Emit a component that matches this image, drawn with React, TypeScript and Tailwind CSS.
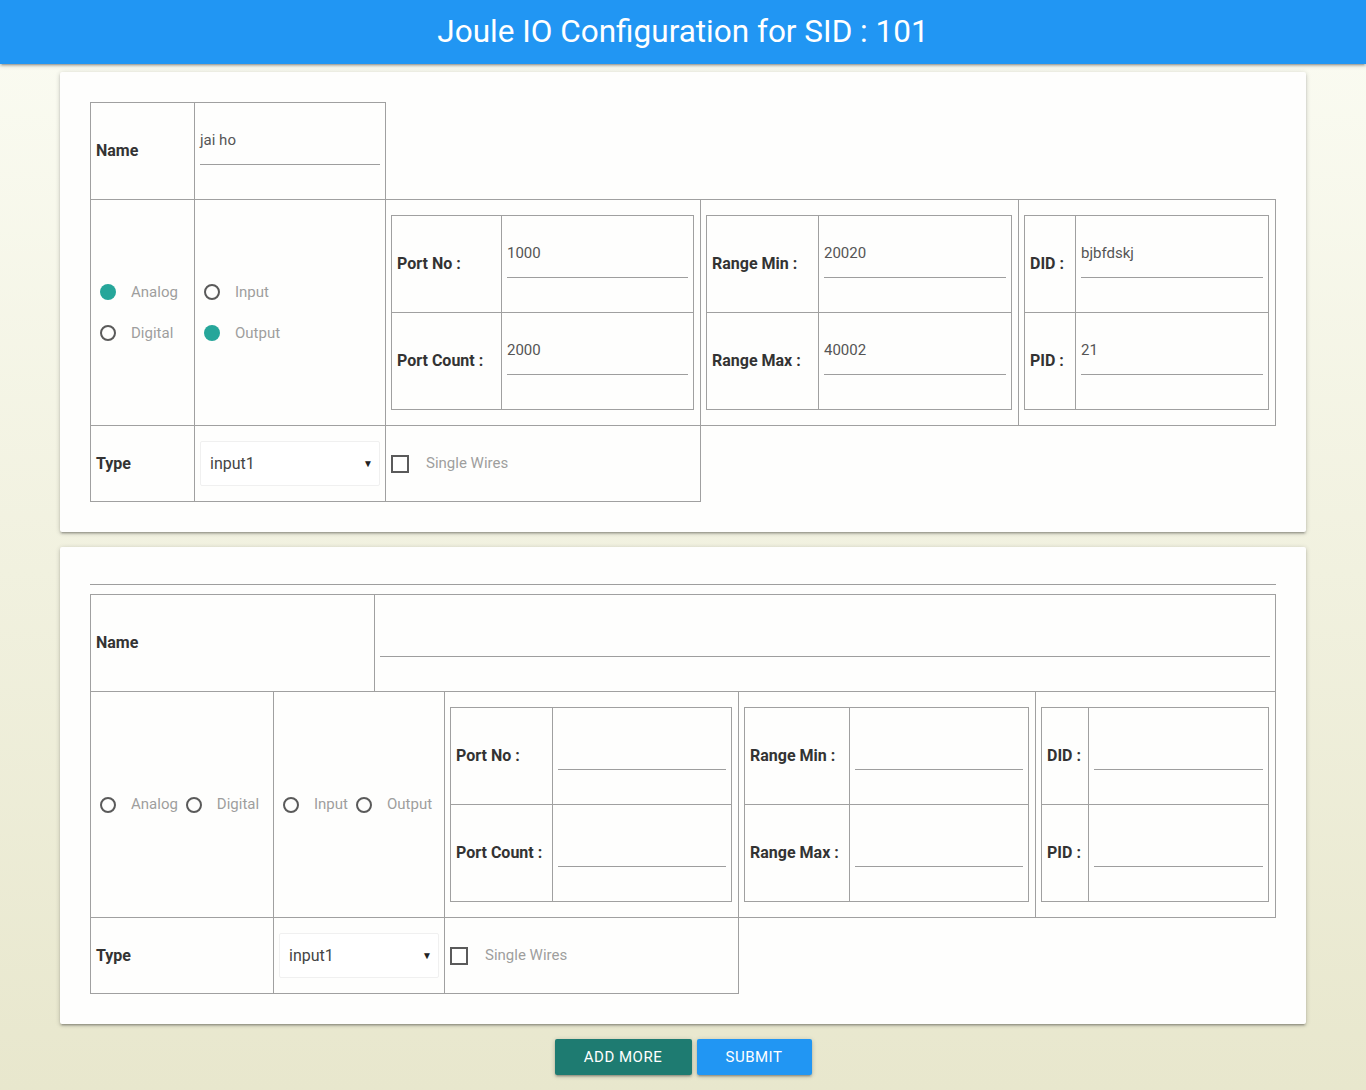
import React from 'react';

const line = 'border border-[#a0a0a0]';

function Label({ text }: { text: string }) {
  return (
    <td className={`${line} px-[5px] py-[15px] align-middle text-[16px] font-bold text-[#333]`}>
      {text}
    </td>
  );
}

function Field({ value = '', colSpan }: { value?: string; colSpan?: number }) {
  return (
    <td colSpan={colSpan} className={`${line} px-[5px] py-[15px] align-top`}>
      <div className="mb-[19px] h-[47px] border-b border-[#9e9e9e] text-[15px] leading-[44px] text-[#555]">
        {value}
      </div>
    </td>
  );
}

function Radio({ label, checked }: { label: string; checked?: boolean }) {
  return (
    <span className="inline-flex h-[25px] items-center pl-[4px]">
      {checked ? (
        <span className="h-[16px] w-[16px] rounded-full bg-[#26a69a]" />
      ) : (
        <span className="h-[16px] w-[16px] rounded-full border-2 border-[#5a5a5a]" />
      )}
      <span className="ml-[15px] text-[15px] text-[#9e9e9e]">{label}</span>
    </span>
  );
}

function SelectBox() {
  return (
    <div className="flex h-[45px] items-center justify-between rounded-[2px] border border-[#f0f0f0] bg-white pl-[9px] pr-[6px] text-[16px] text-[#444]">
      <span>input1</span>
      <span className="text-[10px] text-[#222]">▼</span>
    </div>
  );
}

function CheckBox() {
  return (
    <div className="flex items-center">
      <span className="h-[18px] w-[18px] border-2 border-[#5a5a5a]" />
      <span className="ml-[17px] text-[15px] text-[#9e9e9e]">Single Wires</span>
    </div>
  );
}

function Pair({
  w,
  lw,
  a,
  b,
}: {
  w: number;
  lw: number;
  a: [string, string];
  b: [string, string];
}) {
  return (
    <table className="table-fixed border-collapse" style={{ width: w }}>
      <colgroup>
        <col style={{ width: lw }} />
        <col />
      </colgroup>
      <tbody>
        <tr>
          <Label text={a[0]} />
          <Field value={a[1]} />
        </tr>
        <tr>
          <Label text={b[0]} />
          <Field value={b[1]} />
        </tr>
      </tbody>
    </table>
  );
}

function Nest({ children }: { children: React.ReactNode }) {
  return <td className={`${line} px-[5px] py-[15px] align-middle`}>{children}</td>;
}

function Card({ children, top }: { children: React.ReactNode; top?: string }) {
  return (
    <div
      className={`mx-auto w-[1246px] rounded-[2px] bg-[#fefefd] px-[30px] pb-[30px] shadow-[0_2px_2px_0_rgba(0,0,0,0.14),0_3px_1px_-2px_rgba(0,0,0,0.12),0_1px_5px_0_rgba(0,0,0,0.2)] ${top ?? 'pt-[30px]'}`}
    >
      {children}
    </div>
  );
}

export default function App() {
  return (
    <div className="min-h-[1090px] bg-linear-to-b from-[#fbfcf3] to-[#e8e7cd] font-['Roboto',sans-serif]">
      <header className="relative z-10 flex h-[64px] items-center justify-center bg-[#2196f3] shadow-[0_2px_2px_0_rgba(0,0,0,0.14),0_3px_1px_-2px_rgba(0,0,0,0.12),0_1px_5px_0_rgba(0,0,0,0.2)]">
        <h1 className="text-[31.5px] font-normal text-white">Joule IO Configuration for SID : 101</h1>
      </header>

      <div className="pt-[8px]">
        {/* first block */}
        <Card>
          <table className="w-[1185px] table-fixed border-collapse">
            <colgroup>
              <col className="w-[104px]" />
              <col className="w-[191px]" />
              <col className="w-[315px]" />
              <col className="w-[318px]" />
              <col className="w-[257px]" />
            </colgroup>
            <tbody>
              <tr>
                <Label text="Name" />
                <Field value="jai ho" />
              </tr>
              <tr>
                <td className={`${line} px-[5px] align-middle`}>
                  <div className="flex flex-col gap-[16px]">
                    <Radio label="Analog" checked />
                    <Radio label="Digital" />
                  </div>
                </td>
                <td className={`${line} px-[5px] align-middle`}>
                  <div className="flex flex-col gap-[16px]">
                    <Radio label="Input" />
                    <Radio label="Output" checked />
                  </div>
                </td>
                <Nest>
                  <Pair w={303} lw={110} a={['Port No :', '1000']} b={['Port Count :', '2000']} />
                </Nest>
                <Nest>
                  <Pair w={306} lw={112} a={['Range Min :', '20020']} b={['Range Max :', '40002']} />
                </Nest>
                <Nest>
                  <Pair w={245} lw={51} a={['DID :', 'bjbfdskj']} b={['PID :', '21']} />
                </Nest>
              </tr>
              <tr>
                <Label text="Type" />
                <td className={`${line} px-[5px] py-[15px] align-middle`}>
                  <SelectBox />
                </td>
                <td className={`${line} px-[5px] py-[15px] align-middle`}>
                  <CheckBox />
                </td>
              </tr>
            </tbody>
          </table>
        </Card>

        <div className="h-[15px]" />

        {/* second block */}
        <Card top="pt-[37px]">
          <div className="border-t border-[#9e9e9e]" />
          <table className="mt-[9px] w-[1185px] table-fixed border-collapse">
            <colgroup>
              <col className="w-[183px]" />
              <col className="w-[101px]" />
              <col className="w-[70px]" />
              <col className="w-[294px]" />
              <col className="w-[297px]" />
              <col className="w-[240px]" />
            </colgroup>
            <tbody>
              <tr>
                <td colSpan={2} className={`${line} px-[5px] py-[15px] align-middle text-[16px] font-bold text-[#333]`}>
                  Name
                </td>
                <Field colSpan={4} />
              </tr>
              <tr>
                <td className={`${line} px-[5px] align-middle`}>
                  <div className="flex gap-[4px]">
                    <Radio label="Analog" />
                    <Radio label="Digital" />
                  </div>
                </td>
                <td colSpan={2} className={`${line} px-[5px] align-middle`}>
                  <div className="flex gap-[4px]">
                    <Radio label="Input" />
                    <Radio label="Output" />
                  </div>
                </td>
                <Nest>
                  <Pair w={282} lw={102} a={['Port No :', '']} b={['Port Count :', '']} />
                </Nest>
                <Nest>
                  <Pair w={285} lw={105} a={['Range Min :', '']} b={['Range Max :', '']} />
                </Nest>
                <Nest>
                  <Pair w={228} lw={47} a={['DID :', '']} b={['PID :', '']} />
                </Nest>
              </tr>
              <tr>
                <Label text="Type" />
                <td colSpan={2} className={`${line} px-[5px] py-[15px] align-middle`}>
                  <SelectBox />
                </td>
                <td className={`${line} px-[5px] py-[15px] align-middle`}>
                  <CheckBox />
                </td>
              </tr>
            </tbody>
          </table>
        </Card>

        <div className="mt-[15px] flex justify-center gap-[5px]">
          <button className="h-[36px] w-[137px] rounded-[2px] bg-[#1e7b71] text-[15px] tracking-[0.5px] text-white shadow-[0_2px_2px_0_rgba(0,0,0,0.14),0_3px_1px_-2px_rgba(0,0,0,0.12),0_1px_5px_0_rgba(0,0,0,0.2)]">
            ADD MORE
          </button>
          <button className="h-[36px] w-[115px] rounded-[2px] bg-[#2196f3] text-[15px] tracking-[0.5px] text-white shadow-[0_2px_2px_0_rgba(0,0,0,0.14),0_3px_1px_-2px_rgba(0,0,0,0.12),0_1px_5px_0_rgba(0,0,0,0.2)]">
            SUBMIT
          </button>
        </div>
      </div>
    </div>
  );
}
